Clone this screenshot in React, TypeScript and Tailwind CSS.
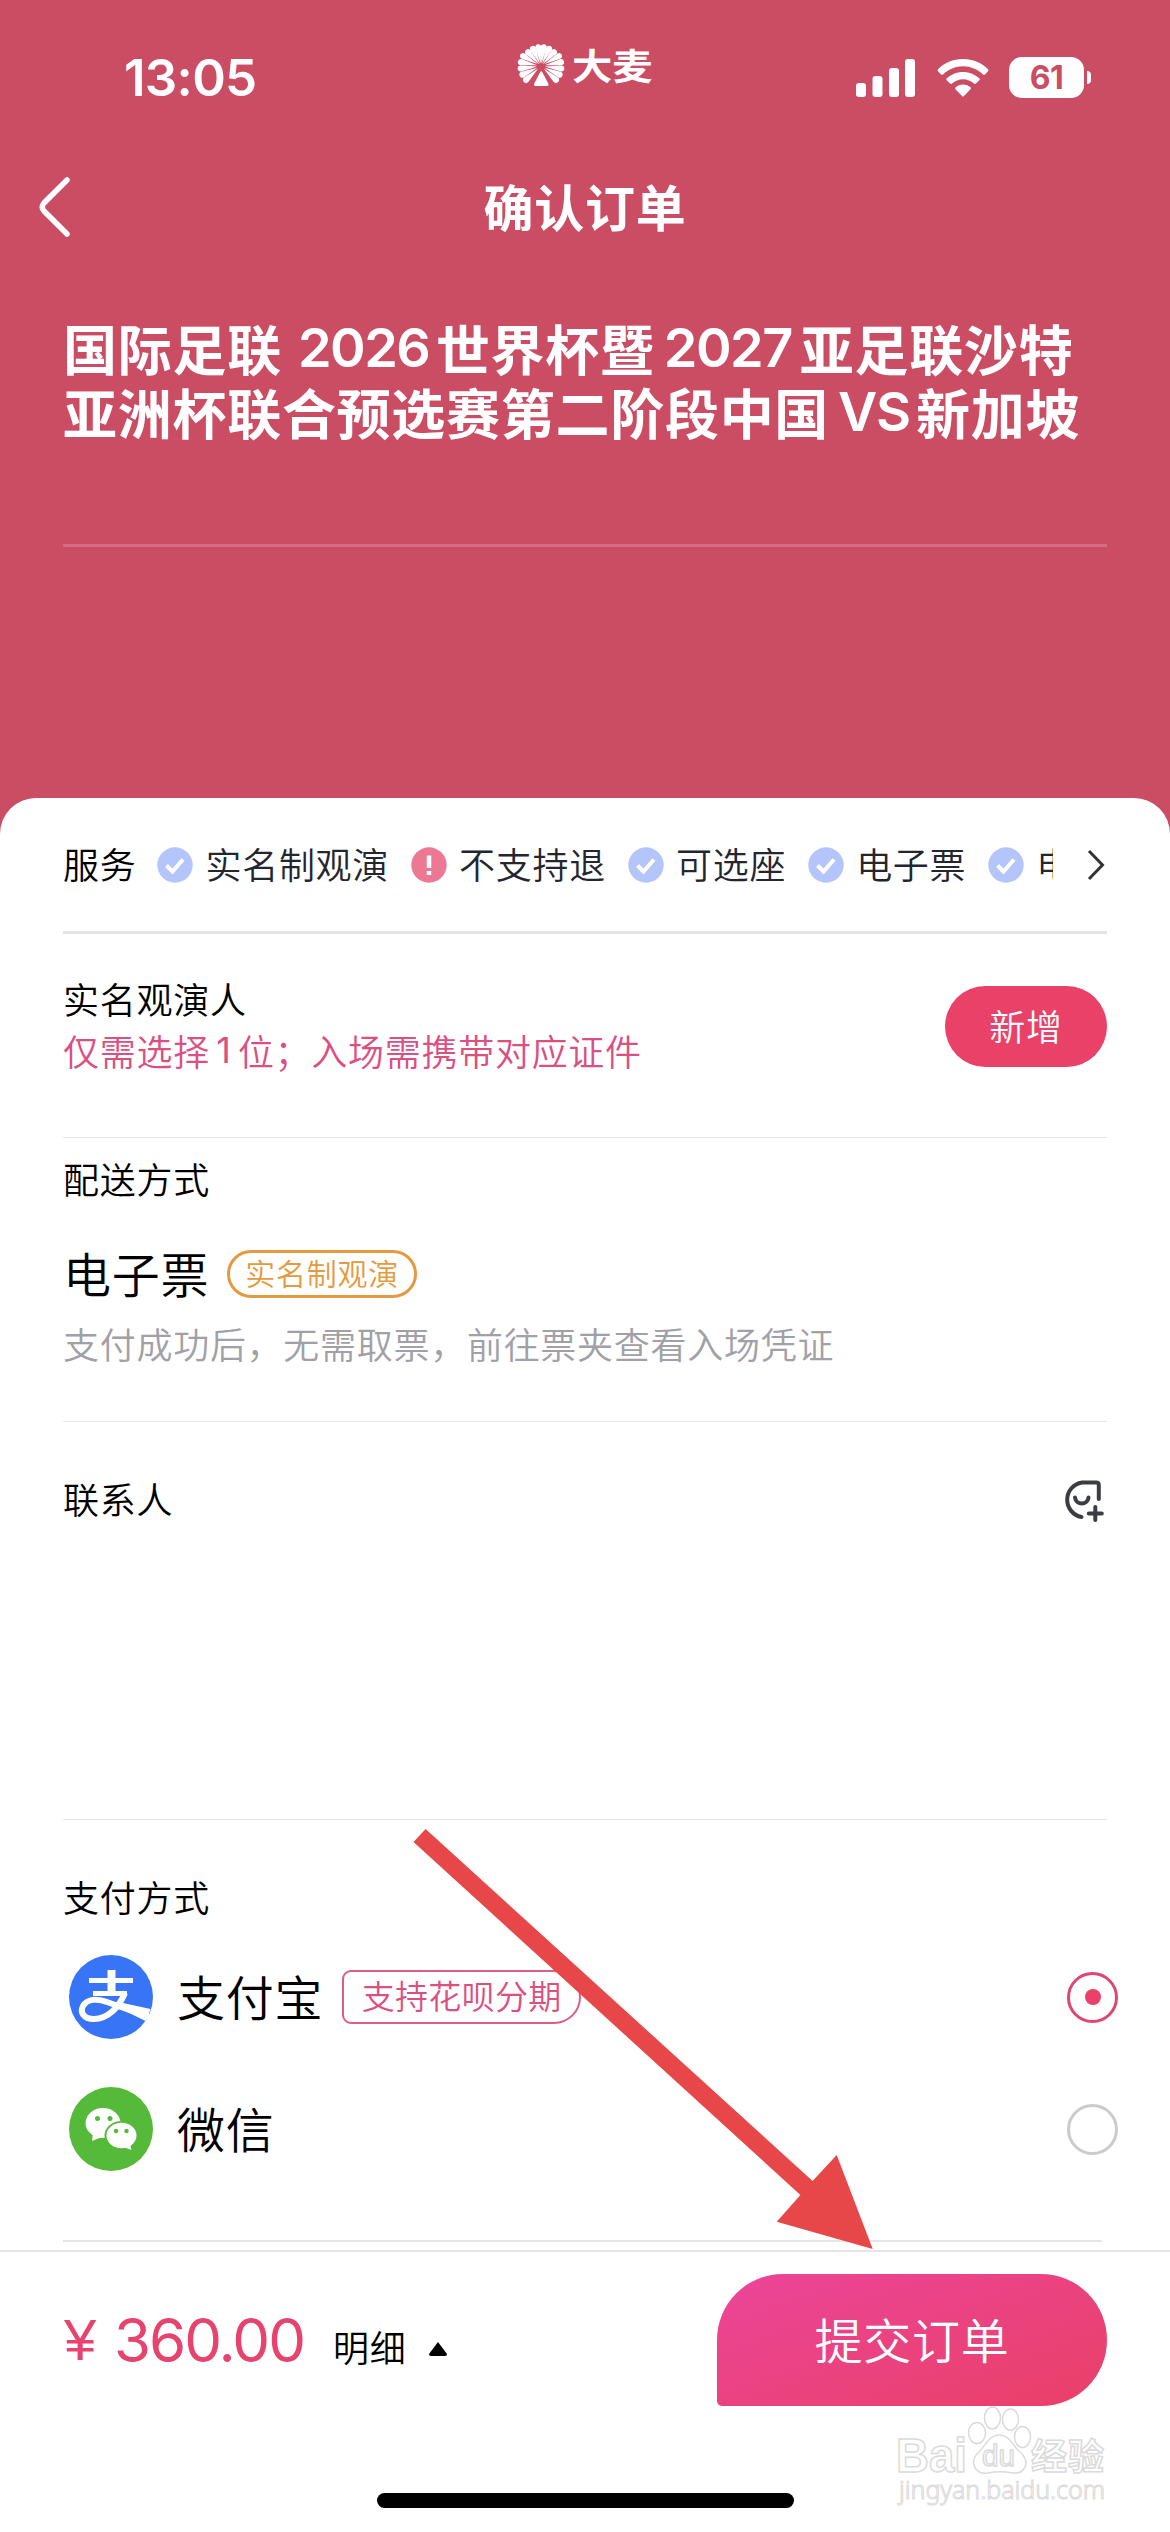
import { ReactNode } from "react";

const SERVICES = [
  { label: "实名制观演", ok: true },
  { label: "不支持退", ok: false },
  { label: "可选座", ok: true },
  { label: "电子票", ok: true },
  { label: "电子发票", ok: true },
];

const StatusBar = () => (
  <div className="h-[142px] flex items-start px-[79px]">
    <p className="w-[210px] pl-[45px] pt-[47px] font-[Inter] text-[51px] leading-[62px] font-semibold tracking-[-0.7px]">
      13:05
    </p>
    <div className="flex items-center ml-[228px] mt-[42px]">
      <DamaiLogo />
      <p className="ml-[6px] pb-[2px] w-[82px] origin-left scale-x-112 text-[36px] leading-[44px] font-bold tracking-normal">
        大麦
      </p>
    </div>
    <div className="ml-auto mt-[57px] mr-0 flex items-start">
      <svg className="mt-[2px]" width="60" height="38" viewBox="0 0 60 38" fill="currentColor">
        <rect x="0" y="24" width="10" height="14" rx="3" />
        <rect x="16.5" y="17" width="10" height="21" rx="3" />
        <rect x="33" y="9" width="10" height="29" rx="3" />
        <rect x="49" y="0" width="10" height="38" rx="3" />
      </svg>
      <svg className="ml-[21px] mt-[2px]" width="52" height="38" viewBox="0 0 52 38" fill="currentColor">
        <path d="M26 0C36 0 45 4 51 10.300Q52 11.300 51 12.300L48 15.400Q47 16.300 46 15.400C40.500 10.300 33.500 7.300 26 7.300S11.500 10.300 6 15.400Q5 16.300 4 15.400L1 12.300Q0 11.300 1 10.300C7 4 16 0 26 0Z" />
        <path d="M26 13C32.500 13 38 15.500 42.300 19.300Q43.300 20.300 42.300 21.300L39 24.500Q38 25.300 37 24.500C34 22 30.200 20.300 26 20.300S18 22 15 24.500Q14 25.300 13 24.500L9.700 21.300Q8.700 20.300 9.700 19.300C14 15.500 19.500 13 26 13Z" />
        <path d="M26 25.500C29 25.500 31.500 26.600 33.500 28.300Q34.500 29.300 33.500 30.300L27 37Q26 38 25 37L18.500 30.300Q17.500 29.300 18.500 28.300C20.500 26.600 23 25.500 26 25.500Z" />
      </svg>
      <div className="ml-[20px] flex items-center">
        <p className="w-[75px] h-[41px] rounded-[13px] bg-white text-center font-[Inter] text-[32px] leading-[42px] font-bold tracking-[-0.5px] text-[#cb4d64]">
          61
        </p>
        <span className="ml-[3px] w-[4px] h-[13px] rounded-r-full bg-white" />
      </div>
    </div>
  </div>
);

const PETALS = [
  -133, -115, -97, -79, -61, -43, -25, -8, 8, 25, 43, 61, 79, 97, 115, 133,
];

const DamaiLogo = () => (
  <svg width="49" height="43" viewBox="0 0 49 43" fill="currentColor">
    {PETALS.map((angle) => (
      <path
        key={angle}
        d="M24 19.500L20.900 3.200Q21 0 24 0Q27 0 27.100 3.200Z"
        transform={`rotate(${angle} 24 22) translate(0 ${Math.abs(angle) > 45 ? -1.500 : 0})`}
      />
    ))}
    <path d="M24 23L33.500 43H14.500Z" fill="#cb4d64" />
    <path d="M23.200 28Q24.200 26.500 25.200 28L31.500 40Q32 42 30 42H18.500Q16.500 42 17 40Z" />
  </svg>
);

const Divider = ({ className = "h-px" }: { className?: string }) => (
  <div className={`bg-[#e5e5e5] ${className}`} />
);

const ServiceIcon = ({ ok }: { ok: boolean }) => (
  <svg className="shrink-0" width="36" height="36" viewBox="0 0 36 36" fill="none">
    <circle cx="18" cy="18" r="17.700" fill={ok ? "#b3c5fb" : "#ec7894"} />
    {ok ? (
      <path d="M9.500 18.500L15.500 24.500L26 12.500" stroke="#fff" strokeWidth="4" />
    ) : (
      <path d="M18 8.500V21M18 24V28" stroke="#fff" strokeWidth="4.500" />
    )}
  </svg>
);

const AddContactIcon = () => (
  <svg
    width="42"
    height="43"
    viewBox="0 0 42 43"
    fill="none"
    stroke="#3b3d42"
    strokeWidth="4"
    strokeLinecap="round"
  >
    <path d="M36.800 19V5Q36.800 2.500 34.300 2.500H20A17.500 17.500 0 0 0 19.500 37" />
    <path d="M13 17.500C14 25.500 25.500 25.500 26.500 17.500" />
    <path d="M33.300 27V40M26.800 33.500H39.800" />
  </svg>
);

const AlipayIcon = () => (
  <svg width="84" height="84" viewBox="0 0 84 84" fill="none">
    <circle cx="42" cy="42" r="42" fill="#3875f6" />
    <path d="M20 25.500H64M24 38.500H58" stroke="#fff" strokeWidth="5" />
    <path d="M42.500 15V38" stroke="#fff" strokeWidth="8" />
    <path
      d="M56 38C50 52 39 64 25 64C14 64 11 57 14 51C18 44 28 43 38 47L80 62"
      stroke="#fff"
      strokeWidth="6"
    />
    <path d="M54 48L81.500 54Q80 61 76.500 66L50 53Z" fill="#fff" />
  </svg>
);

const WechatIcon = () => (
  <svg width="84" height="84" viewBox="0 0 84 84">
    <circle cx="42" cy="42" r="42" fill="#55b93a" />
    <g fill="#fff">
      <ellipse cx="34" cy="36" rx="17.500" ry="15" />
      <path d="M24 46L23 54L33 50Z" />
    </g>
    <ellipse cx="52.500" cy="48.500" rx="17" ry="14.500" fill="#55b93a" />
    <ellipse cx="52.500" cy="48.500" rx="15" ry="12.700" fill="#fff" />
    <path d="M54 60L62.500 63L61 56Z" fill="#fff" />
    <g fill="#55b93a">
      <circle cx="28.500" cy="31.500" r="2.500" />
      <circle cx="41" cy="31.500" r="2.500" />
      <circle cx="47" cy="44" r="2.200" />
      <circle cx="57.500" cy="44" r="2.200" />
    </g>
  </svg>
);

const Radio = ({ checked }: { checked: boolean }) => (
  <div
    className={`size-[51px] rounded-full border-3 flex justify-center items-center ${
      checked ? "border-[#dd4771]" : "border-[#cbcbcb]"
    }`}
  >
    {checked && <span className="size-4 rounded-full bg-[#e9416a]" />}
  </div>
);

const PayRow = ({
  icon,
  name,
  checked,
  children,
}: {
  icon: ReactNode;
  name: string;
  checked: boolean;
  children?: ReactNode;
}) => (
  <div className="h-[132px] flex items-center pl-[69px] pr-[52px]">
    {icon}
    <p className="ml-[24px] pb-[4px] text-[48px] leading-[60px]">{name}</p>
    {children}
    <div className="ml-auto">
      <Radio checked={checked} />
    </div>
  </div>
);

// outlined, barely visible mark in the corner of the footer
const Watermark = () => (
  <svg
    className="absolute left-[891px] top-[2400px]"
    width="224"
    height="112"
    viewBox="0 0 224 112"
    fill="#fff"
    stroke="#dadada"
    strokeWidth="1.500"
  >
    <text x="5" y="72" fontFamily="Liberation Sans" fontWeight="700" fontSize="48" textLength="71" lengthAdjust="spacingAndGlyphs" letterSpacing="0">Bai</text>
    <ellipse cx="86" cy="33" rx="8.500" ry="10.500" />
    <ellipse cx="101.500" cy="18" rx="8" ry="11" />
    <ellipse cx="119.500" cy="19.500" rx="8" ry="10.500" />
    <ellipse cx="131.500" cy="37" rx="8" ry="10.500" />
    <path d="M108 35C119 35 120 44 129 52C140 62 134 74 122 73C112 71 106 71 97 73C84 75 78 62 87 53C96 44 98 35 108 35Z" />
    <text x="91" y="66" fontFamily="Liberation Sans" fontSize="30" textLength="33" lengthAdjust="spacingAndGlyphs" letterSpacing="0">du</text>
    <text x="140" y="70" fontFamily="Noto Sans CJK SC" fontWeight="700" fontSize="36" textLength="73" letterSpacing="0">经验</text>
    <text x="8" y="99" fontFamily="Noto Sans" fontSize="25" strokeWidth="1" textLength="206" letterSpacing="0">jingyan.baidu.com</text>
  </svg>
);

const Arrow = () => (
  <svg className="absolute left-[400px] top-[1820px]" width="480" height="435" viewBox="400 1820 480 435">
    <path
      d="M425.600 1829L812.600 2181L836.700 2155L872.700 2249L776.700 2221.700L800.400 2195L413.500 1842Z"
      fill="#e84749"
    />
  </svg>
);

export default function App() {
  return (
    <div className="relative w-[1170px] h-[2532px] overflow-hidden bg-[#cb4d64] flex flex-col font-['Noto_Sans_CJK_SC',sans-serif] font-[350] text-[36px] leading-[48px] tracking-[0.02em] text-black">
      <header className="h-[798px] shrink-0 text-white">
        <StatusBar />
        <div className="h-[130px] flex items-center px-[39px]">
          <svg width="32" height="60" viewBox="0 0 32 60" fill="none" stroke="currentColor" strokeWidth="5.500" strokeLinecap="round">
            <path d="M28 3L5 26Q1.500 30 5 34L28 57" />
          </svg>
          <h1 className="grow pr-[32px] pb-[5px] text-center text-[50px] leading-[60px] font-bold">确认订单</h1>
        </div>
        <div className="h-[272px] pl-[63px] pt-[44px] text-[54px] leading-[64px] font-bold">
          <p className="flex whitespace-nowrap">
            国际足联
            <span className="w-[154px] pl-[16px] font-[Inter] font-semibold tracking-[-1.5px]">2026</span>
            世界杯暨
            <span className="w-[145px] pl-[9px] font-[Inter] font-semibold tracking-[-1.5px]">2027</span>
            亚足联沙特
          </p>
          <p className="flex whitespace-nowrap">
            亚洲杯联合预选赛第二阶段中国
            <span className="w-[87px] pl-[9px] font-[Inter] font-semibold tracking-[-1.5px]">VS</span>
            新加坡
          </p>
        </div>
        <div className="mx-[63px] h-[3px] bg-[#d66c82]" />
      </header>

      <main className="grow bg-white rounded-t-[36px]">
        <section className="h-[133px] pl-[63px] flex items-center">
          <p className="shrink-0 pb-[4px]">服务</p>
          <div className="ml-[21px] w-[896px] py-2 flex gap-[22px] overflow-hidden text-[#23252f]">
            {SERVICES.map((service) => (
              <div key={service.label} className="shrink-0 flex items-center gap-[12px]">
                <ServiceIcon ok={service.ok} />
                <p className="pb-[4px] whitespace-nowrap">{service.label}</p>
              </div>
            ))}
          </div>
          <svg className="ml-[34px]" width="18" height="32" viewBox="0 0 18 32" fill="none" stroke="#333" strokeWidth="3">
            <path d="M2 2L15.500 16L2 30" />
          </svg>
        </section>
        <Divider className="mx-[63px] h-[3px]" />

        <section className="h-[203px] px-[63px] pt-[38px] flex justify-between">
          <div className="leading-[52px]">
            <p>实名观演人</p>
            <p className="flex text-[#dc4f81]">
              仅需选择
              <span className="w-[28px] text-center font-[Inter] font-normal">1</span>
              位；入场需携带对应证件
            </p>
          </div>
          <button className="mt-[14px] pb-[4px] w-[162px] h-[81px] rounded-full bg-[#ea4168] text-white">新增</button>
        </section>
        <Divider className="mx-[63px] h-px" />

        <section className="h-[283px] pl-[63px] pt-[16px]">
          <p>配送方式</p>
          <div className="mt-[42px] flex items-center h-[60px]">
            <p className="pb-[4px] text-[48px] leading-[60px]">电子票</p>
            <p className="ml-[18px] w-[190px] h-[48px] rounded-full border-3 border-[#e59a40] text-center text-[30px] leading-[39px] text-[#e59a40]">
              实名制观演
            </p>
          </div>
          <p className="mt-[15px] text-[#a0a0a6]">支付成功后，无需取票，前往票夹查看入场凭证</p>
        </section>
        <Divider className="mx-[63px] h-px" />

        <section className="h-[397px] pl-[63px] pr-[66px] pt-[52px] flex justify-between items-start">
          <p>联系人</p>
          <div className="mt-[6px]">
            <AddContactIcon />
          </div>
        </section>
        <Divider className="mx-[63px] h-px" />

        <section className="h-[420px] pt-[52px]">
          <p className="pl-[63px] pb-[11px]">支付方式</p>
          <PayRow icon={<AlipayIcon />} name="支付宝" checked>
            <p className="ml-[19px] w-[239px] h-[54px] rounded-l-[9px] rounded-r-[27px] border-2 border-[#de5c8a] text-center text-[33px] leading-[47px] tracking-[0.3px] text-[#dc4f81]">
              支持花呗分期
            </p>
          </PayRow>
          <PayRow icon={<WechatIcon />} name="微信" checked={false} />
        </section>
        <Divider className="ml-[63px] mr-[68px] h-[2px]" />
      </main>

      <footer className="h-[290px] shrink-0 bg-white pt-[8px]">
        <Divider className="h-[2px]" />
        <div className="mt-[22px] pl-[64px] pr-[63px] h-[132px] flex items-center">
          <p className="flex font-[Inter] font-normal text-[60px] leading-[72px] text-[#e6446f]">
            <span className="w-[50px] font-['Liberation_Sans'] text-[58px]">¥</span>
            <span className="w-[190px] tracking-[-2px]">360.00</span>
          </p>
          <p className="ml-[29px] mt-[12px]">明细</p>
          <svg className="ml-[23px] mt-[17px]" width="18" height="14" viewBox="0 0 18 14">
            <path d="M9 0L18 12Q18 14 16 14H2Q0 14 0 12Z" />
          </svg>
          <button className="ml-auto pb-[5px] w-[390px] h-[132px] rounded-[66px] rounded-bl-[5px] bg-linear-[160deg] from-[#ec4599] to-[#e94067] text-[48px] text-white">
            提交订单
          </button>
        </div>
        <div className="mt-[87px] mx-auto w-[417px] h-[15px] rounded-full bg-black" />
      </footer>

      <Watermark />
      <Arrow />
    </div>
  );
}
